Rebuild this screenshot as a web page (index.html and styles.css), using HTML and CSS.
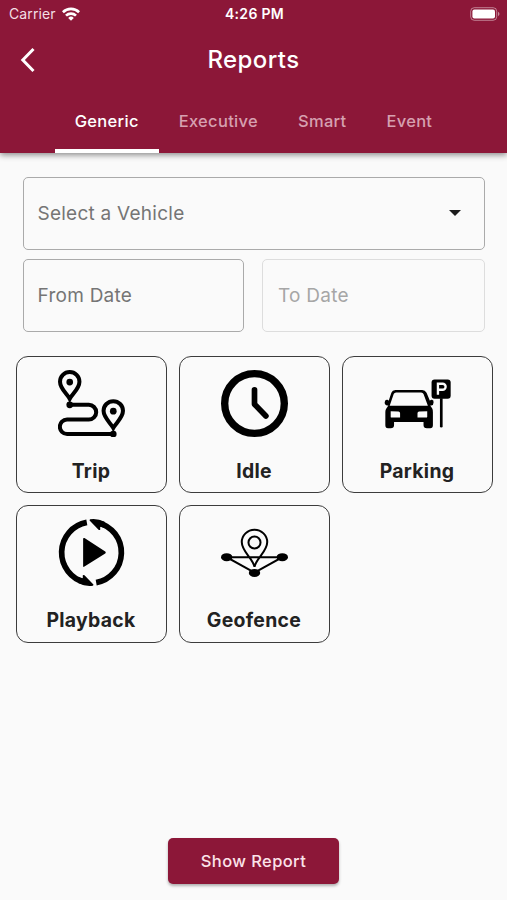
FILE: index.html
```html
<!DOCTYPE html>
<html lang="en">
<head>
<meta charset="utf-8">
<title>Reports</title>
<link rel="stylesheet" href="styles.css">
</head>
<body>
<div class="screen">
  <header class="header">
    <div class="status">
      <div class="carrier">Carrier
        <svg class="wifi" viewBox="0 0 18 14" fill="none" stroke="#fff" stroke-width="2.7"><path d="M.9 5.200a11.600 11.600 0 0 1 16.200 0M4 8.600a7.200 7.200 0 0 1 10 0"/><path d="M9 13.700 6.200 10.900a4 4 0 0 1 5.600 0z" fill="#fff" stroke="none"/></svg>
      </div>
      <div class="time">4:26 PM</div>
      <svg class="battery" viewBox="0 0 30 14"><rect x=".7" y=".7" width="26" height="12.600" rx="3.600" fill="none" stroke="#fff" stroke-opacity=".45"/><rect x="2.400" y="2.400" width="22.600" height="9.200" rx="2" fill="#fff"/><path d="M28 4.800q3 2.200 0 4.400z" fill="#fff" fill-opacity=".5"/></svg>
    </div>
    <div class="bar">
      <svg class="back" viewBox="0 0 16 26" fill="none" stroke="#fff" stroke-width="3"><path d="M13.500 2 2.800 13 13.500 24"/></svg>
      <h1 class="title">Reports</h1>
    </div>
    <nav class="tabs">
      <a class="tab active">Generic</a>
      <a class="tab">Executive</a>
      <a class="tab">Smart</a>
      <a class="tab">Event</a>
    </nav>
  </header>
  <main class="main">
    <div class="fields">
      <div class="field vehicle">Select a Vehicle
        <svg class="caret" viewBox="0 0 12 6"><path d="M0 0h12L6 6z" fill="#1c1c1c"/></svg>
      </div>
      <div class="field">From Date</div>
      <div class="field disabled">To Date</div>
    </div>
    <div class="cards">
      <div class="card">
        <svg class="icon" viewBox="143 60 200 200" fill="none" stroke="#000" stroke-width="12"><path d="M178 146C171 132 149 116 149 95a29 29 0 0 1 58 0c0 21-22 37-29 51zM308 233c-7-14-29-30-29-51a29 29 0 0 1 58 0c0 21-22 37-29 51z"/><path d="M178 164h57a22 22 0 0 1 0 44h-65a21.500 21.500 0 0 0 0 43h138"/><g fill="#000" stroke="none"><circle cx="178" cy="96" r="10"/><circle cx="308" cy="183" r="10"/><circle cx="178" cy="164" r="10"/><circle cx="308" cy="251" r="10"/></g></svg>
        <span class="label">Trip</span>
      </div>
      <div class="card">
        <svg class="icon" viewBox="143 60 200 200" fill="none" stroke="#000"><circle cx="243" cy="160" r="89" stroke-width="22"/><path d="M243 119v43l34 35" stroke-width="17" stroke-linecap="round" stroke-linejoin="round"/></svg>
        <span class="label">Idle</span>
      </div>
      <div class="card">
        <svg class="icon" viewBox="143 60 200 200"><path fill-rule="evenodd" d="M177 120h80q9 0 13 8l10 24q2-4 6-3 6 1 5 8 0 8-7 9h-3l6 9q2 4 2 10v40q0 9-8 9h-10q-10 0-10-9v-10h-88v10q0 9-10 9h-8q-8 0-8-9v-40q0-6 3-10l6-9h-3q-8-1-8-9 0-7 6-8 4-1 6 3l8-24q3-8 12-8zm2 7q-5 0-7 5l-12 35h114l-13-35q-2-5-7-5zM163 183v17q0 2 3 2h25v-13q0-5-5-5zM272 183v17q0 2-3 2h-26v-13q0-5 5-5z"/><rect x="285" y="88" width="57" height="58" rx="9"/><path d="M310 144h8v84q0 4-4 4t-4-4z"/><path d="M304 134v-33h14a9 9 0 0 1 0 18h-14" fill="none" stroke="#fafafa" stroke-width="7"/></svg>
        <span class="label">Parking</span>
      </div>
      <div class="card">
        <svg class="icon" viewBox="11 14 200 200"><path d="M97 24A91.500 91.500 0 0 0 92 203M125 204A91.500 91.500 0 0 0 130 25" fill="none" stroke="#000" stroke-width="17"/><path d="M107 15q22-3 43 7v19l-13-4v9q-2 2-5 0L106 19q-2-2 1-4zM115 213q-22 3-43-7v-19l13 4v-9q2-2 5 0l26 27q2 2-1 4zM86 74q0-5 4-3l62 40q3 3 0 6l-62 39q-4 3-4-2z"/></svg>
        <span class="label">Playback</span>
      </div>
      <div class="card">
        <svg class="icon" viewBox="143 58 200 200" fill="none" stroke="#000" stroke-width="6"><path d="M160 172h166l-83 46zM243 201c-6-27-38-45-38-74a38 37 0 0 1 76 0c0 29-32 47-38 74z"/><circle cx="243" cy="128" r="18"/><g fill="#000" stroke="none"><ellipse cx="160" cy="172" rx="17" ry="12"/><ellipse cx="326" cy="172" rx="17" ry="12"/><ellipse cx="243" cy="219" rx="17" ry="12"/></g></svg>
        <span class="label">Geofence</span>
      </div>
    </div>
  </main>
  <footer class="footer"><button class="show">Show Report</button></footer>
</div>
</body>
</html>
```
FILE: styles.css
```css
* { box-sizing: border-box; }
body { margin: 0; background: #fafafa; font-family: Inter, "Liberation Sans", sans-serif; }
.screen { height: 900px; display: flex; flex-direction: column; overflow: hidden; }
.header { height: 152.5px; flex: none; background: #8c1738; color: #fff; box-shadow: 0 2px 6px rgba(0,0,0,.45); display: flex; flex-direction: column; }
.status { height: 27px; display: grid; grid-template-columns: 1fr auto 1fr; align-items: center; padding: 0 7px 0 9px; }
.carrier { display: flex; align-items: center; gap: 6px; font-size: 14px; color: #f3dfe5; letter-spacing: .1px; }
.wifi { width: 18px; height: 14px; }
.time { font-size: 14px; font-weight: 600; letter-spacing: .3px; }
.battery { width: 30px; height: 14px; justify-self: end; }
.bar { height: 65px; display: grid; grid-template-columns: 1fr auto 1fr; align-items: center; padding: 0 20px; }
.back { width: 16px; height: 26px; }
.title { margin: 0; font-size: 24px; font-weight: 500; letter-spacing: .4px; }
.tabs { flex: 1; display: flex; justify-content: center; }
.tab { padding: 19px 20px 0; font-size: 16.500px; line-height: 20px; font-weight: 500; letter-spacing: .3px; color: #d6a0b0; }
.tab.active { color: #fff; border-bottom: 4px solid #fff; }
.main { flex: 1; padding: 24px 15px 0 15.500px; }
.fields { display: grid; grid-template-columns: 221.500px 223px; column-gap: 18px; row-gap: 9px; padding-left: 7px; }
.field { height: 72.500px; border: 1.500px solid #aaa; border-radius: 5px; display: flex; align-items: center; padding: 0 14px; font-size: 19px; letter-spacing: .25px; color: #757575; }
.vehicle { grid-column: 1 / -1; height: 73.500px; justify-content: space-between; padding-right: 23px; }
.disabled { border-color: #ddd; color: #a6a6a6; padding-left: 15px; }
.caret { width: 12px; height: 6px; }
.cards { display: grid; grid-template-columns: repeat(3, 151px); gap: 12px; margin-top: 24.500px; }
.card { height: 137.300px; border: 1.400px solid #3c3c3c; border-radius: 12px; display: flex; flex-direction: column; align-items: center; padding-top: 13px; }
.icon { width: 67px; height: 67px; display: block; }
.label { margin-top: 21.500px; font-size: 19.400px; line-height: 24px; font-weight: 650; letter-spacing: .3px; color: #222; }
.footer { display: flex; justify-content: center; padding-bottom: 16px; }
.show { width: 171px; height: 46px; border: 0; border-radius: 5px; background: #8c1738; color: #fbe3ea; font: 500 16.500px Inter, "Liberation Sans", sans-serif; letter-spacing: .4px; box-shadow: 0 2px 3px rgba(0,0,0,.3); }
```
